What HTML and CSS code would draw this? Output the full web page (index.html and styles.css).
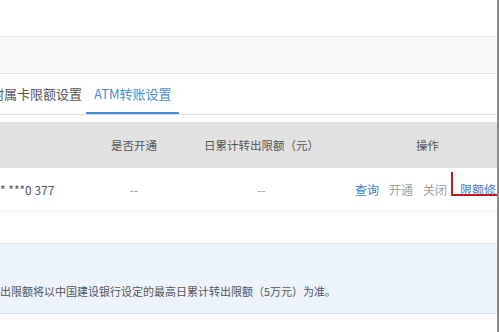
FILE: index.html
```html
<!DOCTYPE html>
<html lang="zh-CN">
<head>
  <meta charset="UTF-8">
  <meta name="viewport" content="width=device-width, initial-scale=1.0">
  <title>ATM转账设置</title>
  <link rel="stylesheet" href="styles.css">
</head>
<body>
  <div class="page">
    <div class="top-space"></div>
    <div class="toolbar"></div>

    <div class="tabs">
      <div class="tab">附属卡限额设置</div>
      <div class="tab active">ATM转账设置</div>
    </div>

    <div class="table">
      <div class="row head">
        <div class="cell card"></div>
        <div class="cell mid">是否开通</div>
        <div class="cell mid">日累计转出限额（元）</div>
        <div class="cell ops-head">操作</div>
      </div>
      <div class="row body">
        <div class="cell card">* ***0 377</div>
        <div class="cell mid dash">--</div>
        <div class="cell mid dash">--</div>
        <div class="cell ops">
          <a class="op link">查询</a>
          <a class="op off">开通</a>
          <a class="op off">关闭</a>
          <a class="op link marked">限额修改</a>
        </div>
      </div>
    </div>

    <div class="note">
      <p>出限额将以中国建设银行设定的最高日累计转出限额（5万元）为准。</p>
    </div>
  </div>
</body>
</html>
```

FILE: styles.css
```css
/* page frame */
body {
  margin: 0;
  font-family: "Noto Sans CJK SC", "Liberation Sans", sans-serif;
  background: #fff;
  color: #555;
  overflow: hidden;
}

.page {
  width: 497px;
  height: 332px;
  border-right: 2px solid #8c8c8c;
  overflow: hidden;
}

.top-space {
  height: 36px;
}

.toolbar {
  height: 36px;
  background: #f9f9f9;
  border-top: 1px solid #e8e8e8;
  border-bottom: 1px solid #e4e4e4;
}

/* tabs */
.tabs {
  display: flex;
  height: 40px;
  border-bottom: 1px solid #dcdcdc;
}

.tab {
  padding: 0 8px;
  font-size: 13px;
  line-height: 40px;
  color: #555;
  white-space: nowrap;
  border-bottom: 2px solid transparent;
  height: 38px;
}

.tab:first-child {
  margin-left: -17px;
  padding-right: 4px;
}

.tab.active {
  color: #4a8fd6;
  border-bottom-color: #3f8bd5;
}

/* table */
.table {
  margin-top: 7px;
}

.row {
  display: grid;
  grid-template-columns: 90px 88px 167px 1fr;
  align-items: center;
}

.row.head {
  height: 46px;
  background: #e2e2e2;
  font-size: 11.5px;
  color: #555;
}

.row.body {
  height: 43px;
  border-bottom: 1px solid #ececec;
  font-size: 12px;
}

.cell {
  white-space: nowrap;
}

.mid {
  text-align: center;
}

.dash {
  color: #999;
}

.ops-head {
  padding-left: 71px;
}

.ops {
  display: flex;
  gap: 10px;
  padding-left: 10px;
  font-size: 12px;
}

.op {
  cursor: pointer;
}

.op.link {
  color: #3b7cc6;
}

.op.off {
  color: #a0a0a0;
}

.op.marked {
  position: relative;
  padding-left: 3px;
}

.op.marked::before {
  content: "";
  position: absolute;
  left: -6px;
  top: -9px;
  width: 60px;
  height: 22px;
  border-left: 2px solid #c4161c;
  border-bottom: 2px solid #c4161c;
}

/* note */
.note {
  margin-top: 31px;
  height: 69px;
  background: #edf3fb;
  border-top: 1px solid #d8e3ef;
  border-bottom: 1px solid #d8e3ef;
  font-size: 11px;
  color: #555;
}

.note p {
  margin: 0;
  padding-top: 39px;
  white-space: nowrap;
}
```
